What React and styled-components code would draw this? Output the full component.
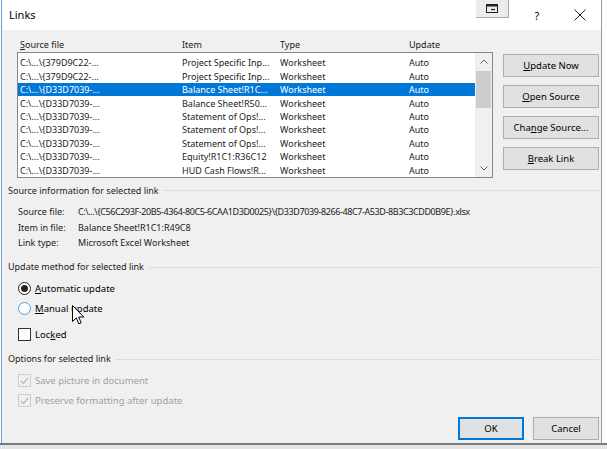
import React from "react";
import styled, { createGlobalStyle } from "styled-components";

const Global = createGlobalStyle`
  html, body { margin: 0; padding: 0; background: #fff; overflow: hidden; }
  * { box-sizing: border-box; }
`;

const FONT = `"Noto Sans", "Open Sans", sans-serif`;

const Screen = styled.div`
  width: 607px;
  height: 449px;
  position: relative;
  display: flex;
  flex-direction: column;
  font-family: ${FONT};
  font-size: 9px;
  color: #1a1a1a;
  background: #fdfdfd;
  overflow: hidden;
`;

const Window = styled.div`
  margin-left: 1px;
  width: 601px;
  height: 443px;
  display: flex;
  flex-direction: column;
  border-left: 1px solid #6d9ed3;
  border-right: 1px solid #9a9a9a;
  overflow: hidden;
`;

const TitleBar = styled.div`
  height: 30px;
  flex-shrink: 0;
  background: #fff;
  display: flex;
  align-items: center;
  padding-left: 7px;
`;

const Title = styled.div`
  font-size: 11px;
  flex: 1;
  color: #000;
  margin-top: -1px;
`;

const TitleIconBtn = styled.div`
  width: 33px;
  height: 18px;
  align-self: flex-start;
  background: #ececec;
  border-right: 1px solid #a8a8a8;
  border-bottom: 1px solid #a8a8a8;
  display: flex;
  align-items: center;
  justify-content: center;
  margin-right: 18px;
`;

const Help = styled.div`
  width: 20px;
  text-align: center;
  font-size: 11px;
  color: #000;
  margin-right: 22px;
`;

const Close = styled.div`
  width: 22px;
  display: flex;
  justify-content: center;
  margin-right: 10px;
`;

const Body = styled.div`
  flex: 1;
  background: #f0f0f0;
  display: flex;
  flex-direction: column;
`;

const TopArea = styled.div`
  display: flex;
  padding-left: 15px;
  margin-top: 7px;
`;

const ListCol = styled.div`
  width: 476px;
  display: flex;
  flex-direction: column;
`;

const Cols = styled.div`
  display: grid;
  grid-template-columns: 162px 98px 129px 1fr;
  padding-left: ${(p) => p.$pad || 0}px;
  height: ${(p) => p.$h}px;
  align-items: center;
  background: ${(p) => (p.$sel ? "#0078d7" : "transparent")};
  color: ${(p) => (p.$sel ? "#fff" : "inherit")};
  white-space: nowrap;
  overflow: hidden;
`;

const Cell = styled.div`
  overflow: hidden;
  white-space: nowrap;
`;

const ListBox = styled.div`
  height: 126px;
  margin-top: 1px;
  border: 1px solid #828790;
  background: #fff;
  display: flex;
`;

const Rows = styled.div`
  flex: 1;
  padding-top: 3px;
  display: flex;
  flex-direction: column;
`;

const Scroll = styled.div`
  width: 17px;
  background: #f0f0f0;
  display: flex;
  flex-direction: column;
  align-items: center;
`;

const Arrow = styled.div`
  height: 17px;
  width: 17px;
  display: flex;
  align-items: center;
  justify-content: center;
`;

const Thumb = styled.div`
  width: 15px;
  height: 37px;
  background: #cdcdcd;
  margin-top: 1px;
`;

const Spacer = styled.div`
  flex: 1;
`;

const BtnCol = styled.div`
  margin-left: 10px;
  margin-top: 17px;
  display: flex;
  flex-direction: column;
  gap: 8px;
`;

const Button = styled.div`
  width: ${(p) => p.$w || 96}px;
  height: 23px;
  background: #e1e1e1;
  border: ${(p) => (p.$def ? "2px solid #0078d7" : "1px solid #adadad")};
  display: flex;
  align-items: center;
  justify-content: center;
  color: #000;
  font-size: 9.5px;
`;

const Heading = styled.div`
  display: flex;
  align-items: center;
  height: 14px;
  margin-top: ${(p) => p.$mt}px;
  padding-left: 6px;
  padding-right: 2px;
  color: #222;
  gap: 4px;
  &::after {
    content: "";
    flex: 1;
    border-top: 1px solid #dcdcdc;
    margin-top: 1px;
  }
`;

const InfoList = styled.div`
  margin-top: 7px;
  padding-left: 16px;
  display: flex;
  flex-direction: column;
`;

const InfoRow = styled.div`
  height: 15.5px;
  display: flex;
  align-items: center;
  white-space: nowrap;
`;

const InfoLabel = styled.div`
  width: 60px;
`;

const InfoPath = styled.span`
  letter-spacing: -0.4px;
`;

const OptList = styled.div`
  margin-top: ${(p) => p.$mt}px;
  padding-left: 16px;
  display: flex;
  flex-direction: column;
`;

const OptRow = styled.div`
  height: 20px;
  display: flex;
  align-items: center;
  gap: 4px;
  margin-top: ${(p) => p.$mt || 0}px;
  color: ${(p) => (p.$dis ? "#a0a0a0" : "#000")};
  font-size: 9.5px;
`;

const Radio = styled.div`
  width: 13px;
  height: 13px;
  border-radius: 50%;
  background: #fff;
  border: 1px solid ${(p) => (p.$on ? "#222" : "#5a9bd5")};
  display: flex;
  align-items: center;
  justify-content: center;
  &::after {
    content: "";
    width: 7px;
    height: 7px;
    border-radius: 50%;
    background: ${(p) => (p.$on ? "#222" : "transparent")};
  }
`;

const Check = styled.div`
  width: 13px;
  height: 13px;
  background: ${(p) => (p.$dis ? "#f0f0f0" : "#fff")};
  border: 1px solid ${(p) => (p.$dis ? "#cccccc" : "#333")};
  display: flex;
  align-items: center;
  justify-content: center;
`;

const Footer = styled.div`
  margin-top: 6px;
  display: flex;
  justify-content: flex-end;
  gap: 9px;
  padding-right: 2px;
`;

const BottomStrip = styled.div`
  height: 6px;
  border-top: 2px solid #7a7a7a;
  background: #e6e6e6;
`;

const Cursor = styled.svg`
  position: absolute;
  left: 72px;
  top: 305px;
`;

const U = styled.span`
  text-decoration: underline;
  text-underline-offset: 1px;
`;

const rows = [
  ["C:\\...\\{379D9C22-...", "Project Specific Inp...", "Worksheet", "Auto"],
  ["C:\\...\\{379D9C22-...", "Project Specific Inp...", "Worksheet", "Auto"],
  ["C:\\...\\{D33D7039-...", "Balance Sheet!R1C...", "Worksheet", "Auto", true],
  ["C:\\...\\{D33D7039-...", "Balance Sheet!R50...", "Worksheet", "Auto"],
  ["C:\\...\\{D33D7039-...", "Statement of Ops!...", "Worksheet", "Auto"],
  ["C:\\...\\{D33D7039-...", "Statement of Ops!...", "Worksheet", "Auto"],
  ["C:\\...\\{D33D7039-...", "Statement of Ops!...", "Worksheet", "Auto"],
  ["C:\\...\\{D33D7039-...", "Equity!R1C1:R36C12", "Worksheet", "Auto"],
  ["C:\\...\\{D33D7039-...", "HUD Cash Flows!R...", "Worksheet", "Auto"],
];

const CheckMark = ({ color }) => (
  <svg width="9" height="8" viewBox="0 0 9 8">
    <path d="M1 4 L3.5 6.5 L8 1" fill="none" stroke={color} strokeWidth="1.2" />
  </svg>
);

export default function App() {
  return (
    <Screen>
      <Global />
      <Window>
        <TitleBar>
          <Title>Links</Title>
          <TitleIconBtn>
            <svg width="12" height="9" viewBox="0 0 12 9">
              <rect x="0.5" y="0.5" width="11" height="8" fill="none" stroke="#222" />
              <rect x="0.5" y="0.5" width="11" height="2" fill="#222" />
              <path d="M5 5.5 H9" stroke="#222" strokeWidth="1.2" />
            </svg>
          </TitleIconBtn>
          <Help>?</Help>
          <Close>
            <svg width="12" height="12" viewBox="0 0 12 12">
              <path d="M0.5 0.5 L11.5 11.5 M11.5 0.5 L0.5 11.5" stroke="#222" strokeWidth="1" />
            </svg>
          </Close>
        </TitleBar>
        <Body>
          <TopArea>
            <ListCol>
              <Cols $h={14} $pad={3}>
                <Cell>
                  <U>S</U>ource file
                </Cell>
                <Cell>Item</Cell>
                <Cell>Type</Cell>
                <Cell>Update</Cell>
              </Cols>
              <ListBox>
                <Rows>
                  {rows.map((r, i) => (
                    <Cols key={i} $h={13.5} $pad={2} $sel={r[4]}>
                      <Cell>{r[0]}</Cell>
                      <Cell>{r[1]}</Cell>
                      <Cell>{r[2]}</Cell>
                      <Cell>{r[3]}</Cell>
                    </Cols>
                  ))}
                </Rows>
                <Scroll>
                  <Arrow>
                    <svg width="8" height="5" viewBox="0 0 8 5">
                      <path d="M0.5 4.5 L4 1 L7.5 4.5" fill="none" stroke="#606060" />
                    </svg>
                  </Arrow>
                  <Thumb />
                  <Spacer />
                  <Arrow>
                    <svg width="8" height="5" viewBox="0 0 8 5">
                      <path d="M0.5 0.5 L4 4 L7.5 0.5" fill="none" stroke="#606060" />
                    </svg>
                  </Arrow>
                </Scroll>
              </ListBox>
            </ListCol>
            <BtnCol>
              <Button>
                <span>
                  <U>U</U>pdate Now
                </span>
              </Button>
              <Button>
                <span>
                  <U>O</U>pen Source
                </span>
              </Button>
              <Button>
                <span>
                  Cha<U>n</U>ge Source...
                </span>
              </Button>
              <Button>
                <span>
                  <U>B</U>reak Link
                </span>
              </Button>
            </BtnCol>
          </TopArea>

          <Heading $mt={5}>Source information for selected link</Heading>
          <InfoList>
            <InfoRow>
              <InfoLabel>Source file:</InfoLabel>
              <InfoPath>
                {"C:\\...\\{C56C293F-20B5-4364-80C5-6CAA1D3D0025}\\{D33D7039-8266-48C7-A53D-8B3C3CDD0B9E}.xlsx"}
              </InfoPath>
            </InfoRow>
            <InfoRow>
              <InfoLabel>Item in file:</InfoLabel>
              Balance Sheet!R1C1:R49C8
            </InfoRow>
            <InfoRow>
              <InfoLabel>Link type:</InfoLabel>
              Microsoft Excel Worksheet
            </InfoRow>
          </InfoList>

          <Heading $mt={9}>Update method for selected link</Heading>
          <OptList $mt={5}>
            <OptRow>
              <Radio $on />
              <span>
                <U>A</U>utomatic update
              </span>
            </OptRow>
            <OptRow>
              <Radio />
              <span>
                <U>M</U>anual update
              </span>
            </OptRow>
            <OptRow $mt={6}>
              <Check />
              <span>
                Loc<U>k</U>ed
              </span>
            </OptRow>
          </OptList>

          <Heading $mt={7}>Options for selected link</Heading>
          <OptList $mt={5}>
            <OptRow $dis>
              <Check $dis>
                <CheckMark color="#b8b8b8" />
              </Check>
              <span>Save picture in document</span>
            </OptRow>
            <OptRow $dis>
              <Check $dis>
                <CheckMark color="#b8b8b8" />
              </Check>
              <span>Preserve formatting after update</span>
            </OptRow>
          </OptList>

          <Footer>
            <Button $def $w={66}>OK</Button>
            <Button $w={66}>Cancel</Button>
          </Footer>
        </Body>
      </Window>
      <BottomStrip />
      <Cursor width="13" height="21" viewBox="0 0 13 21">
        <path
          d="M0.5 0.5 L0.5 16.5 L4.3 12.8 L6.8 18.8 L9.2 17.8 L6.7 12 L11.8 12 Z"
          fill="#fff"
          stroke="#000"
          strokeWidth="1"
          strokeLinejoin="round"
        />
      </Cursor>
    </Screen>
  );
}
